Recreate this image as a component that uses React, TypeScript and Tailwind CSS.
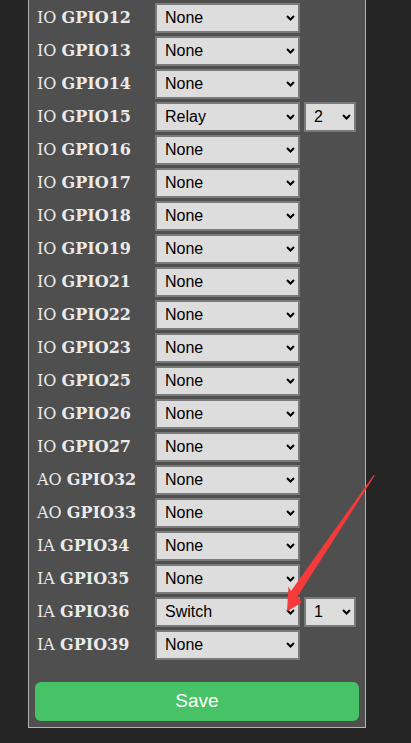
import React from "react";

type Pin = {
  kind: string;
  gpio: string;
  value: string;
  index?: string;
};

const pins: Pin[] = [
  { kind: "IO", gpio: "GPIO12", value: "None" },
  { kind: "IO", gpio: "GPIO13", value: "None" },
  { kind: "IO", gpio: "GPIO14", value: "None" },
  { kind: "IO", gpio: "GPIO15", value: "Relay", index: "2" },
  { kind: "IO", gpio: "GPIO16", value: "None" },
  { kind: "IO", gpio: "GPIO17", value: "None" },
  { kind: "IO", gpio: "GPIO18", value: "None" },
  { kind: "IO", gpio: "GPIO19", value: "None" },
  { kind: "IO", gpio: "GPIO21", value: "None" },
  { kind: "IO", gpio: "GPIO22", value: "None" },
  { kind: "IO", gpio: "GPIO23", value: "None" },
  { kind: "IO", gpio: "GPIO25", value: "None" },
  { kind: "IO", gpio: "GPIO26", value: "None" },
  { kind: "IO", gpio: "GPIO27", value: "None" },
  { kind: "AO", gpio: "GPIO32", value: "None" },
  { kind: "AO", gpio: "GPIO33", value: "None" },
  { kind: "IA", gpio: "GPIO34", value: "None" },
  { kind: "IA", gpio: "GPIO35", value: "None" },
  { kind: "IA", gpio: "GPIO36", value: "Switch", index: "1" },
  { kind: "IA", gpio: "GPIO39", value: "None" },
];

function Chevron() {
  return (
    <svg
      className="pointer-events-none absolute right-[5px] top-1/2 -translate-y-1/2"
      width="9"
      height="6"
      viewBox="0 0 9 6"
      fill="none"
    >
      <path d="M1 1l3.5 3.5L8 1" stroke="#000" strokeWidth="2" />
    </svg>
  );
}

function Select({ value, options, width }: { value: string; options: string[]; width: string }) {
  return (
    <div className={`relative h-[30px] ${width}`}>
      <select
        defaultValue={value}
        className="h-full w-full appearance-none rounded-none border-2 border-[#7a7a7a] bg-[#dddddd] pl-[8px] text-[16px] text-black outline-none font-['Liberation_Sans',Arial,sans-serif]"
      >
        {options.map((o) => (
          <option key={o}>{o}</option>
        ))}
      </select>
      <Chevron />
    </div>
  );
}

function PinRow({ pin }: { pin: Pin }) {
  return (
    <div className="flex h-[30px] items-center">
      <div className="w-[120px] pl-[2px] text-[16px] text-[#eaeaea] font-['DejaVu_Serif',serif]">
        {pin.kind} <b>{pin.gpio}</b>
      </div>
      <Select value={pin.value} options={["None", "Relay", "Switch", pin.value]} width="w-[145px]" />
      {pin.index && (
        <div className="ml-[4px]">
          <Select value={pin.index} options={["1", "2", "3", "4"]} width="w-[52px]" />
        </div>
      )}
    </div>
  );
}

export default function App() {
  return (
    <div className="relative min-h-[743px] bg-[#252525]">
      <div className="ml-[28px] w-[338px] border-x border-b border-[#b4b4b4] bg-[#4f4f4f] px-[6px] pt-[3px] pb-[6px]">
        <div className="flex flex-col gap-[3px]">
          {pins.map((p) => (
            <PinRow key={p.gpio} pin={p} />
          ))}
        </div>
        <button className="mt-[22px] h-[39px] w-full rounded-[6px] bg-[#47c266] text-[19px] text-white font-['Liberation_Sans',Arial,sans-serif]">
          Save
        </button>
      </div>

      {/* red annotation arrow */}
      <svg
        className="pointer-events-none absolute left-0 top-0"
        width="411"
        height="743"
        viewBox="0 0 411 743"
      >
        <polygon
          points="374.8,475.5 297.8,596 301.5,602.5 287,611.5 288.5,586.5 291,591 373.8,475"
          fill="#f43a3a"
        />
      </svg>
    </div>
  );
}
